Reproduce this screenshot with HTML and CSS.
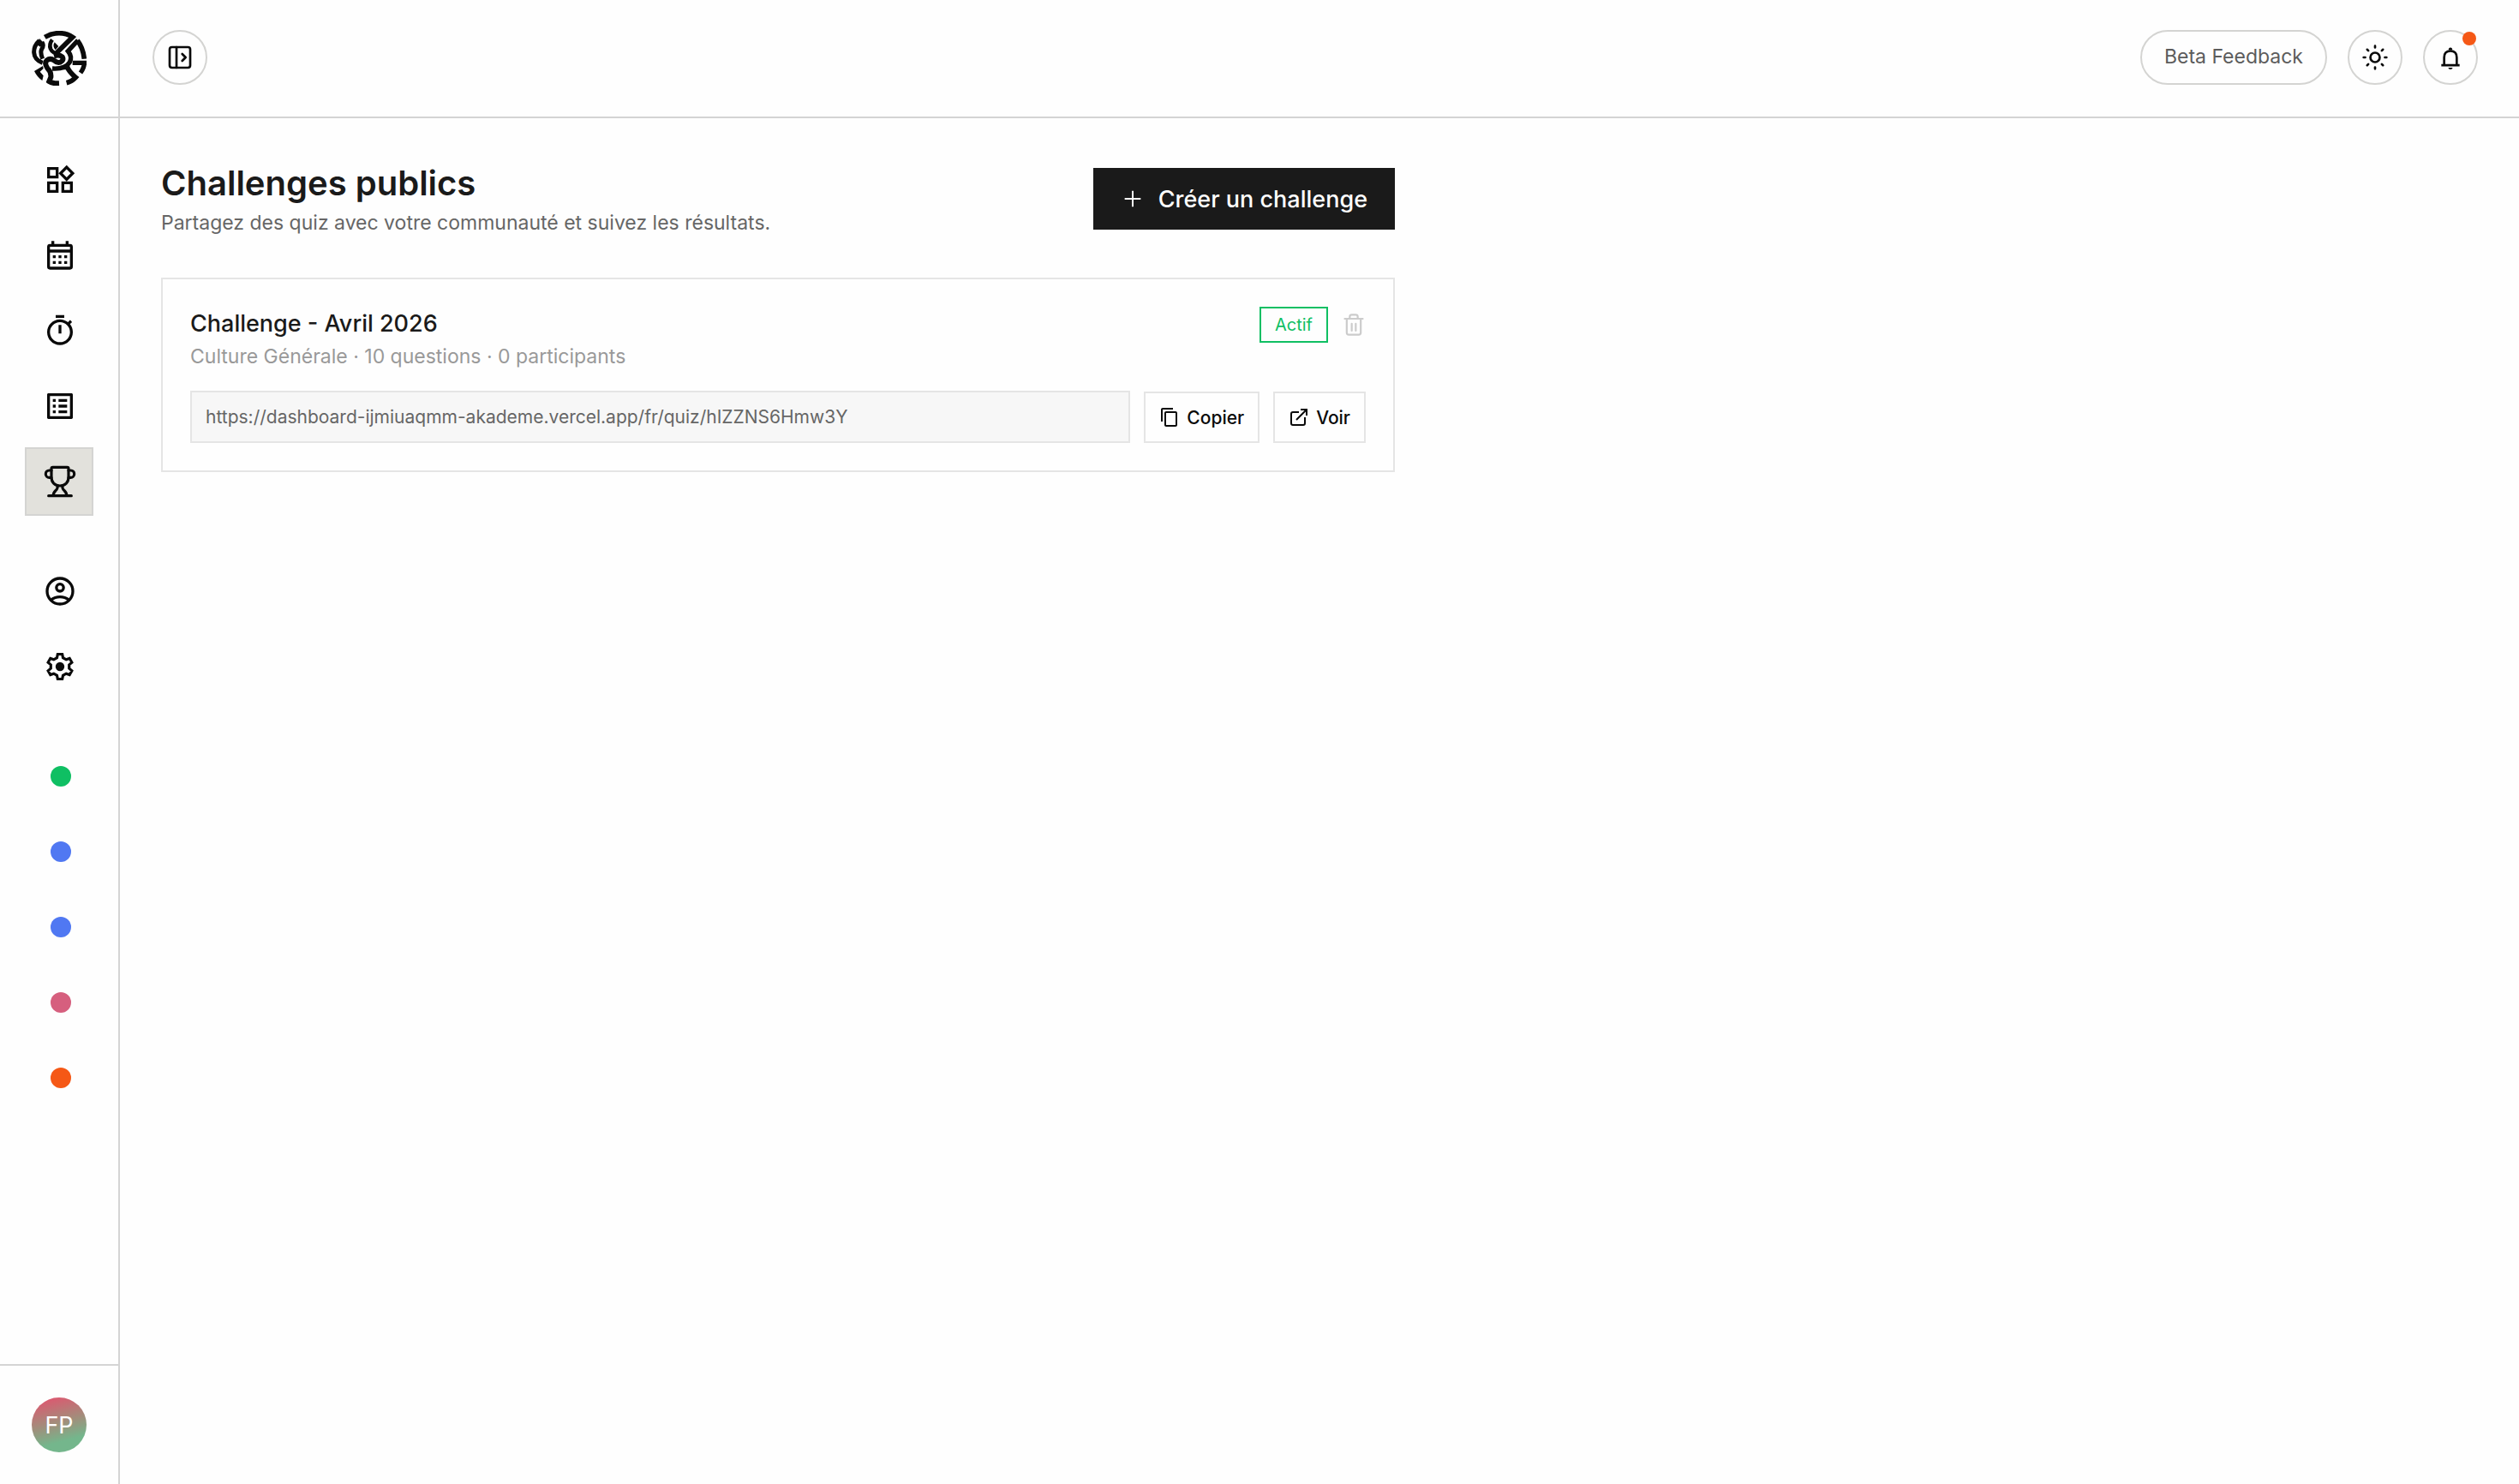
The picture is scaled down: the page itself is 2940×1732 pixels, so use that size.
FILE: index.html
```html
<!DOCTYPE html>
<html lang="fr">
<head>
    <meta charset="UTF-8">
    <meta name="viewport" content="width=device-width, initial-scale=1.0">
    <title>Challenges publics</title>
    <link rel="stylesheet" href="styles.css">
</head>
<body>
    <div class="app">
        <aside class="sidebar">
            <a href="#" class="logo" aria-label="Accueil">
                <svg viewBox="114 108 192 192" fill="none" stroke="currentColor" stroke-width="16">
                    <!-- top arc and diagonal -->
                    <path d="M160 130Q184 116 210 116Q236 116 257 130L195 191" stroke-width="17"/>
                    <!-- trunk -->
                    <path d="M192 196Q212 190 221 199Q228 211 214 218Q202 221 193 212Q179 202 167 211Q157 221 169 239Q183 252 181 270L175 285Q186 293 210 292" stroke-width="18"/>
                    <!-- outer hook and legs -->
                    <path d="M276 141L241 179Q257 198 247 218Q232 243 186 240" stroke-width="16"/>
                    <path d="M238 233Q243 250 268 271Q255 285 236 290" stroke-width="17"/>
                    <path d="M200 236Q226 248 244 242L246 226z" fill="currentColor" stroke="none"/>
                    <path d="M274 142Q294 168 298 206" stroke-width="17"/>
                    <path d="M257 220H306M298 220Q298 238 285 255"/>
                    <!-- ear -->
                    <path d="M141 142Q121 160 122 184Q124 210 152 220M150 148Q158 158 149 172Q143 184 152 206" stroke-width="15"/>
                    <path d="M141 135L157 151L144 164L132 156z" fill="currentColor" stroke="none"/>
                    <!-- left foot -->
                    <path d="M123 249L153 231L155 240L143 251L155 265L151 282Q133 270 123 249z" fill="currentColor" stroke="none"/>
                    <!-- eye -->
                    <path d="M186 139Q174 154 180 171Q184 181 193 185" stroke-width="14"/>
                    <path d="M194 148L208 162L197 175Q186 162 194 148z" fill="currentColor" stroke="none"/>
                </svg>
            </a>

            <nav class="nav">
                <div class="nav-group">
                    <a href="#" class="nav-item" aria-label="Tableau de bord">
                        <svg class="icon-lg" viewBox="0 0 24 24" fill="currentColor"><path d="M16.66 4.52l2.83 2.83-2.83 2.83-2.83-2.83 2.83-2.83M9 5v4H5V5h4m10 10v4h-4v-4h4M9 15v4H5v-4h4m7.66-13.31L11 7.34 16.66 13l5.66-5.66-5.66-5.65zM11 3H3v8h8V3zm10 10h-8v8h8v-8zm-10 0H3v8h8v-8z"/></svg>
                    </a>
                    <a href="#" class="nav-item" aria-label="Calendrier">
                        <svg class="icon-lg" viewBox="0 0 24 24" fill="none" stroke="currentColor" stroke-width="2">
                            <rect x="4" y="5" width="16" height="16" rx="1"/>
                            <path d="M4 9h16M7 2v3M17 2v3M7 13h2M11 13h2M15 13h2M7 17h2M11 17h2M15 17h2"/>
                        </svg>
                    </a>
                    <a href="#" class="nav-item" aria-label="Minuteur">
                        <svg class="icon-lg" viewBox="0 0 24 24" fill="currentColor"><path d="M15 1H9v2h6V1zm-4 13h2V8h-2v6zm8.03-6.61 1.42-1.42c-.43-.51-.9-.99-1.41-1.41l-1.42 1.42C16.07 4.74 14.12 4 12 4c-4.97 0-9 4.03-9 9s4.02 9 9 9 9-4.03 9-9c0-2.12-.74-4.07-1.97-5.61zM12 20c-3.87 0-7-3.13-7-7s3.13-7 7-7 7 3.13 7 7-3.13 7-7 7z"/></svg>
                    </a>
                    <a href="#" class="nav-item" aria-label="Quiz">
                        <svg class="icon-lg" viewBox="0 0 24 24" fill="currentColor"><path d="M11 7h6v2h-6zm0 4h6v2h-6zm0 4h6v2h-6zM7 7h2v2H7zm0 4h2v2H7zm0 4h2v2H7zM20.1 3H3.9c-.5 0-.9.4-.9.9v16.2c0 .4.4.9.9.9h16.2c.4 0 .9-.5.9-.9V3.9c0-.5-.5-.9-.9-.9zM19 19H5V5h14v14z"/></svg>
                    </a>
                    <a href="#" class="nav-item active" aria-label="Challenges" aria-current="page">
                        <svg class="icon-lg" viewBox="0 0 24 24" fill="none" stroke="currentColor" stroke-width="1.9" stroke-linecap="round" stroke-linejoin="round">
                            <path d="M6 3q0-1 1-1h10q1 0 1 1v6q0 2.6-1.6 4.3Q14.7 15 12 15t-4.400-1.700Q6 11.600 6 9z"/>
                            <path d="M6 4.200H4.500a2.500 2.500 0 0 0 0 5H6M18 4.200h1.500a2.500 2.500 0 0 1 0 5H18"/>
                            <path d="M10.300 15q.2 2-1.300 3.300-1.800 1.700-1.700 3.700M13.700 15q-.2 2 1.300 3.300 1.800 1.700 1.700 3.700M4 22h16"/>
                        </svg>
                    </a>
                </div>
                <div class="nav-group">
                    <a href="#" class="nav-item" aria-label="Profil">
                        <svg class="icon-lg" viewBox="0 0 24 24" fill="none" stroke="currentColor" stroke-width="2">
                            <circle cx="12" cy="12" r="9"/>
                            <circle cx="12" cy="9.500" r="2.500"/>
                            <path d="M5.500 18.300Q8.500 16 12 16t6.500 2.300"/>
                        </svg>
                    </a>
                    <a href="#" class="nav-item" aria-label="Paramètres">
                        <svg class="icon-lg" viewBox="-12 -12 24 24" fill="none" stroke="currentColor" stroke-width="1.900">
                            <path d="M-1.600-8.700H1.600L2.100-6.200L4.320-4.920L6.730-5.740L8.330-2.960L6.420-1.280V1.280L8.330 2.960L6.730 5.740L4.320 4.920L2.100 6.200L1.600 8.700H-1.600L-2.100 6.200L-4.320 4.920L-6.730 5.740L-8.330 2.960L-6.420 1.280V-1.280L-8.330-2.960L-6.730-5.740L-4.320-4.920L-2.100-6.200z"/>
                            <circle r="3.100" fill="currentColor" stroke="none"/>
                        </svg>
                    </a>
                </div>
                <div class="nav-group">
                    <a href="#" class="nav-item nav-dot green" aria-label="Matière 1"></a>
                    <a href="#" class="nav-item nav-dot blue" aria-label="Matière 2"></a>
                    <a href="#" class="nav-item nav-dot blue" aria-label="Matière 3"></a>
                    <a href="#" class="nav-item nav-dot pink" aria-label="Matière 4"></a>
                    <a href="#" class="nav-item nav-dot orange" aria-label="Matière 5"></a>
                </div>
            </nav>

            <div class="sidebar-footer">
                <button type="button" class="avatar">FP</button>
            </div>
        </aside>

        <div class="content">
            <header class="topbar">
                <button type="button" class="round-btn" aria-label="Ouvrir le menu">
                    <svg class="icon-md" viewBox="0 0 24 24" fill="none" stroke="currentColor" stroke-width="2" stroke-linecap="round" stroke-linejoin="round">
                        <rect x="3" y="3" width="18" height="18" rx="2"/>
                        <path d="M9 3v18M14 9l3 3-3 3"/>
                    </svg>
                </button>
                <div class="topbar-actions">
                    <button type="button" class="feedback-btn">Beta Feedback</button>
                    <button type="button" class="round-btn" aria-label="Changer le thème">
                        <svg class="icon-md" viewBox="0 0 24 24" fill="none" stroke="currentColor" stroke-width="2" stroke-linecap="round">
                            <circle cx="12" cy="12" r="4.100"/>
                            <path d="M12 2v1.400M12 20.600V22M2 12h1.400M20.600 12H22M5.100 5.100l1 1M17.900 17.900l1 1M5.100 18.900l1-1M17.900 6.100l1-1"/>
                        </svg>
                    </button>
                    <button type="button" class="round-btn" aria-label="Notifications">
                        <svg class="icon-md" viewBox="0 0 24 24" fill="none" stroke="currentColor" stroke-width="2">
                            <path d="M4 18.900h16M6.500 18.900V12q0-5.600 5.500-5.600t5.500 5.600v6.900"/>
                            <path d="M12 3.300q1.700 0 1.700 2.400h-3.400q0-2.400 1.700-2.400zM10 21h4q-.5 1.500-2 1.500T10 21z" fill="currentColor" stroke="none"/>
                        </svg>
                        <span class="notif-dot"></span>
                    </button>
                </div>
            </header>

            <main class="main">
                <div class="page-header">
                    <div>
                        <h1>Challenges publics</h1>
                        <p class="subtitle">Partagez des quiz avec votre communauté et suivez les résultats.</p>
                    </div>
                    <button type="button" class="create-btn">
                        <svg class="icon-sm" viewBox="0 0 24 24" fill="none" stroke="currentColor" stroke-width="1.700"><path d="M12 4v16M4 12h16"/></svg>
                        Créer un challenge
                    </button>
                </div>

                <section class="card">
                    <div class="card-top">
                        <div>
                            <h2>Challenge - Avril 2026</h2>
                            <p class="meta">Culture Générale · 10 questions · 0 participants</p>
                        </div>
                        <div class="card-status">
                            <span class="badge">Actif</span>
                            <button type="button" class="delete-btn" aria-label="Supprimer">
                                <svg class="icon-sm" viewBox="0 0 24 24" fill="none" stroke="currentColor" stroke-width="1.900" stroke-linecap="round" stroke-linejoin="round">
                                    <path d="M3 6h18M5 6v14q0 2 2 2h10q2 0 2-2V6M8 6V4q0-2 2-2h4q2 0 2 2v2M10 11v7M14 11v7"/>
                                </svg>
                            </button>
                        </div>
                    </div>
                    <div class="card-link">
                        <input type="text" class="url" aria-label="Lien du quiz" value="https://dashboard-ijmiuaqmm-akademe.vercel.app/fr/quiz/hIZZNS6Hmw3Y" readonly>
                        <button type="button" class="small-btn">
                            <svg class="icon-xs" viewBox="0 0 24 24" fill="currentColor"><path d="M16 1H4c-1.100 0-2 .9-2 2v14h2V3h12V1zm3 4H8c-1.100 0-2 .9-2 2v14c0 1.100.9 2 2 2h11c1.100 0 2-.9 2-2V7c0-1.100-.9-2-2-2zm0 16H8V7h11v14z"/></svg>
                            Copier
                        </button>
                        <a href="#" class="small-btn">
                            <svg class="icon-xs" viewBox="0 0 24 24" fill="none" stroke="currentColor" stroke-width="2">
                                <path d="M12 6H5q-2 0-2 2v11q0 2 2 2h12q2 0 2-2v-7M14 3h7v7M21 3L9 15"/>
                            </svg>
                            Voir
                        </a>
                    </div>
                </section>
            </main>
        </div>
    </div>
</body>
</html>
```

FILE: styles.css
```css
* {
    box-sizing: border-box;
}
body {
    margin: 0;
    font-family: Inter, "Liberation Sans", sans-serif;
    font-size: 23px;
    color: #0a0a0a;
    background: #fefefe;
}
h1, h2, p {
    margin: 0;
}
a {
    color: inherit;
    text-decoration: none;
}
button, input {
    font-family: inherit;
    color: inherit;
}
button {
    cursor: pointer;
}
svg {
    display: block;
    flex-shrink: 0;
}
.icon-lg {
    width: 40px;
    height: 40px;
}
.icon-md {
    width: 32px;
    height: 32px;
}
.icon-sm {
    width: 28px;
    height: 28px;
}
.icon-xs {
    width: 24px;
    height: 24px;
}

.app {
    display: flex;
    min-height: 100vh;
}

/* sidebar */
.sidebar {
    display: flex;
    flex-direction: column;
    width: 140px;
    border-right: 2px solid #d4d4d4;
}
.logo {
    display: flex;
    justify-content: center;
    padding: 36px 0;
    border-bottom: 2px solid #d4d4d4;
}
.logo svg {
    width: 64px;
    height: 64px;
}
.nav {
    flex: 1;
    display: flex;
    flex-direction: column;
    align-items: center;
    gap: 48px;
    padding: 32px 0;
}
.nav-group {
    display: flex;
    flex-direction: column;
    gap: 8px;
}
.nav-item {
    display: flex;
    align-items: center;
    justify-content: center;
    width: 80px;
    height: 80px;
    padding-left: 2px;
    border: 2px solid transparent;
}
.nav-item.active {
    background: #e2e1dc;
    border-color: #d4d4d2;
}
.nav-dot {
    padding-left: 4px;
}
.nav-dot::before {
    content: "";
    width: 24px;
    height: 24px;
    border-radius: 50%;
    background: currentColor;
}
.green {
    color: #0fbf63;
}
.blue {
    color: #5078f2;
}
.pink {
    color: #d65f7e;
}
.orange {
    color: #f55816;
}
.sidebar-footer {
    display: flex;
    justify-content: center;
    padding: 37px 0;
    border-top: 2px solid #d4d4d4;
}
.avatar {
    width: 64px;
    height: 64px;
    padding: 0;
    border: none;
    border-radius: 50%;
    background: linear-gradient(165deg, #e0556f 5%, #9f907c 48%, #74b68c 75%);
    color: #fff;
    font-size: 27px;
}

/* top bar */
.content {
    flex: 1;
    min-width: 0;
}
.topbar {
    display: flex;
    align-items: center;
    justify-content: space-between;
    padding: 35px 48px 37px 38px;
    border-bottom: 2px solid #d4d4d4;
}
.topbar-actions {
    display: flex;
    gap: 24px;
}
.round-btn, .feedback-btn {
    height: 64px;
    border: 2px solid #d4d4d2;
    border-radius: 32px;
    background: transparent;
}
.round-btn {
    position: relative;
    display: flex;
    align-items: center;
    justify-content: center;
    width: 64px;
    padding: 0;
}
.feedback-btn {
    padding: 0 26px 2px;
    font-size: 23px;
    color: #5c5c5c;
}
.notif-dot {
    position: absolute;
    top: 0;
    right: 0;
    width: 16px;
    height: 16px;
    border-radius: 50%;
    background: #f55816;
}

/* page */
.main {
    max-width: 1536px;
    padding: 48px;
}
.page-header {
    display: flex;
    align-items: center;
    justify-content: space-between;
    margin-bottom: 46px;
}
h1 {
    font-size: 40px;
    line-height: 56px;
    font-weight: 600;
    color: #1a1a1a;
}
.subtitle {
    line-height: 36px;
    color: #666;
}
.create-btn {
    display: flex;
    align-items: center;
    gap: 16px;
    height: 72px;
    padding: 0 32px;
    border: none;
    background: #1a1a1a;
    color: #fff;
    font-size: 27px;
    font-weight: 500;
}
.card {
    padding: 32px;
    border: 2px solid #e5e5e5;
}
.card-top {
    display: flex;
    align-items: flex-start;
    justify-content: space-between;
    margin-bottom: 22px;
}
h2 {
    font-size: 27px;
    line-height: 40px;
    font-weight: 500;
    color: #1a1a1a;
}
.meta {
    line-height: 36px;
    color: #999;
}
.card-status {
    display: flex;
    align-items: center;
    gap: 16px;
}
.badge {
    padding: 6px 16px;
    border: 2px solid #0fbf63;
    color: #0fbf63;
    font-size: 20px;
    line-height: 26px;
}
.delete-btn {
    padding: 0;
    border: none;
    background: none;
    color: #ccc;
}
.card-link {
    display: flex;
    align-items: flex-end;
    gap: 16px;
}
.url {
    flex: 1;
    min-width: 0;
    height: 61px;
    padding: 0 16px;
    border: 2px solid #e5e5e5;
    background: #f7f7f7;
    color: #666;
    font-size: 21px;
}
.small-btn {
    display: flex;
    align-items: center;
    gap: 8px;
    height: 60px;
    padding: 0 16px;
    border: 2px solid #e5e5e5;
    background: transparent;
    font-size: 21px;
    font-weight: 500;
}
```
